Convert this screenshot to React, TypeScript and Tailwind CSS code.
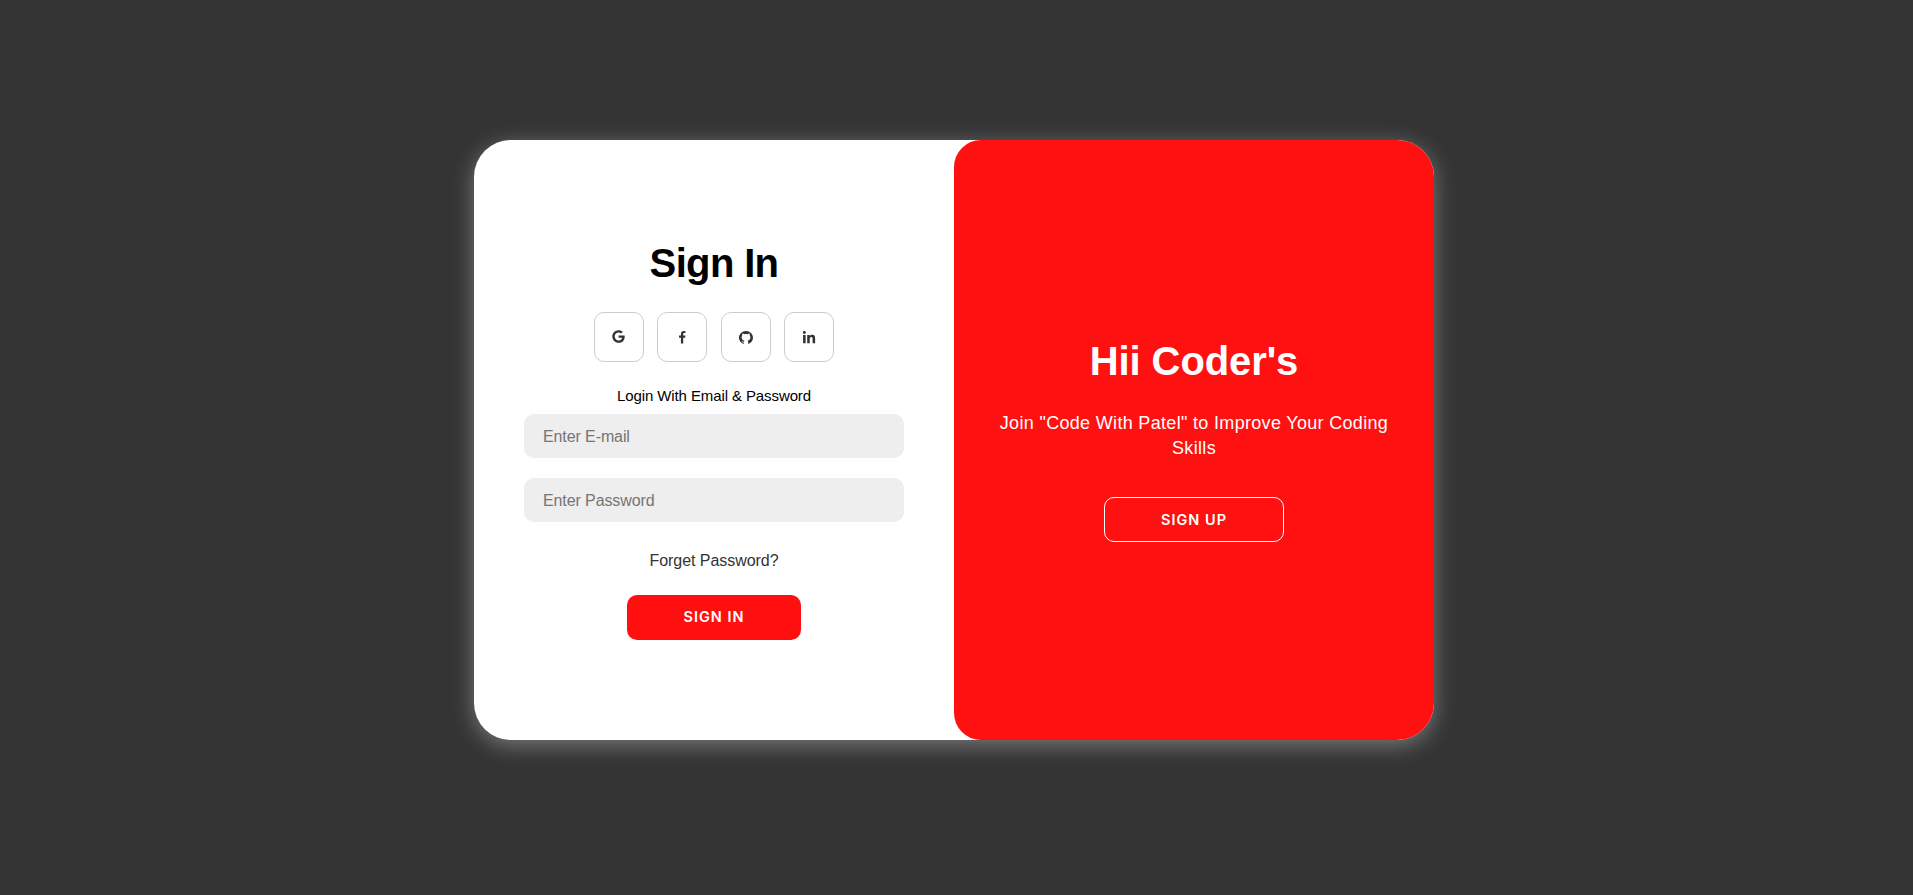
import type { ReactNode } from "react";
import { BiLogoFacebook } from "react-icons/bi";
import { FaGoogle, FaLinkedinIn } from "react-icons/fa6";

function GitHubMark() {
  return (
    <svg width="14" height="13" viewBox="0 0 14 13" fill="currentColor" aria-hidden="true">
      <path d="M7 0C3.1 0 0 3 0 6.8c0 2.8 1.8 5.2 4.8 6.2v-1.4c-1.2 0-1.6-.7-2-1.6.9 0 1.1.9 2.2.8.1-.5.2-.8.4-1.1C3.6 9.3 2.6 8.1 2.6 6.2c0-.8.3-1.4.7-2-.2-.6-.1-1.3.1-1.8.8 0 1.4.4 2 .8 1-.3 2.2-.3 3.2 0 .6-.4 1.2-.8 2-.8.2.5.3 1.2.1 1.8.4.6.7 1.2.7 2 0 1.9-1 3.1-2.8 3.5.4.4.6.9.6 1.5V13c3-1 4.8-3.4 4.8-6.2C14 3 10.9 0 7 0z" />
    </svg>
  );
}

function SocialLink({ label, children }: { label: string; children: ReactNode }) {
  return (
    <a
      href="#"
      aria-label={label}
      className="flex size-[50px] items-center justify-center rounded-[10px] border border-[#cccccc] text-[#333333]"
    >
      {children}
    </a>
  );
}

const fieldClass =
  "h-11 w-full rounded-[10px] bg-[#eeeeee] px-[19px] pt-px text-[16px] tracking-[-0.1px] text-[#333333] outline-none placeholder:text-[#757575]";

export default function App() {
  return (
    <main className="flex h-[895px] justify-center bg-[#343434] pt-[140px] pr-[5px] font-['Liberation_Sans',Arial,sans-serif]">
      <div className="flex h-[600px] w-[960px] overflow-hidden rounded-[37px] bg-white shadow-[0_5px_22px_rgba(255,255,255,0.34)]">
        <form className="flex w-1/2 flex-col items-center px-[50px] pt-[100px]" onSubmit={(e) => e.preventDefault()}>
          <h1 className="text-[40px] leading-[46px] font-bold tracking-[-0.65px] text-black">Sign In</h1>
          <div className="mt-[26px] flex gap-[13.33px]">
            <SocialLink label="Google"><FaGoogle className="mr-px mb-px text-[13px]" /></SocialLink>
            <SocialLink label="Facebook"><BiLogoFacebook className="text-[16.5px]" /></SocialLink>
            <SocialLink label="GitHub"><GitHubMark /></SocialLink>
            <SocialLink label="LinkedIn"><FaLinkedinIn className="mt-px text-[14px]" /></SocialLink>
          </div>
          <span className="mt-[25px] text-[15px] leading-[18px] tracking-[-0.1px] text-black">Login With Email &amp; Password</span>
          <input type="email" placeholder="Enter E-mail" className={`${fieldClass} mt-[9px]`} />
          <input type="password" placeholder="Enter Password" className={`${fieldClass} mt-5`} />
          <a href="#" className="mt-[30px] text-[16px] leading-[18px] tracking-[-0.05px] text-[#333333]">Forget Password?</a>
          <button className="mt-[25px] h-[45px] w-[174px] rounded-[10px] bg-[#ff0f0f] pb-px font-[Inter,sans-serif] text-[14.5px] font-semibold tracking-[1px] text-white">
            SIGN IN
          </button>
        </form>
        <section className="flex w-1/2 flex-col items-center rounded-l-[27px] bg-[#ff1111] px-[30px] pt-[198px] text-center text-white">
          <h1 className="text-[40px] leading-[46px] font-bold tracking-[-0.1px]">Hii Coder&apos;s</h1>
          <p className="mt-[27px] text-[18px] leading-[25px] tracking-[0.32px]">
            Join &quot;Code With Patel&quot; to Improve Your Coding Skills
          </p>
          <button className="mt-[36px] h-[45px] w-[180px] rounded-[10px] border border-white font-[Inter,sans-serif] text-[14.5px] font-semibold tracking-[1px]">
            SIGN UP
          </button>
        </section>
      </div>
    </main>
  );
}
